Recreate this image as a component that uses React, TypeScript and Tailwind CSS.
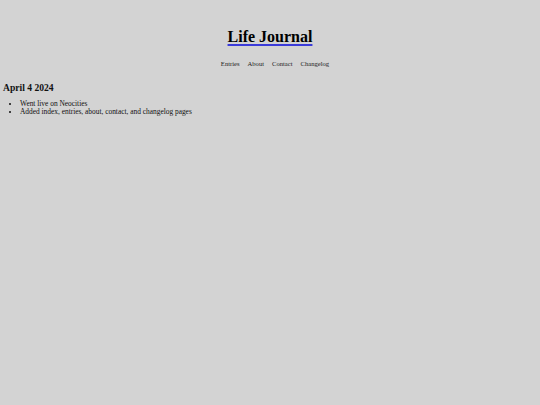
export default function App() {
  return (
    <div className="min-h-[405px] w-full bg-[#d3d3d3] text-[#111]" style={{ fontFamily: '"Liberation Serif", serif' }}>
      <div className="pt-[27px] flex justify-center">
        <a href="#" className="text-[16px] font-bold leading-[19px] text-black underline decoration-[#3b3bd9] decoration-2 underline-offset-2">Life Journal</a>
      </div>
      <nav className="mt-[14px] flex justify-center gap-[8px] pl-[10px] text-[6.6px] leading-[8px] text-[#222]">
        <span>Entries</span>
        <span>About</span>
        <span>Contact</span>
        <span>Changelog</span>
      </nav>
      <div className="px-[3px] mt-[14px]">
        <h2 className="text-[9.6px] font-bold leading-[12px]">April 4 2024</h2>
        <ul className="mt-[6px] list-disc pl-[17px] text-[7.4px] leading-[8px]">
          <li>Went live on Neocities</li>
          <li>Added index, entries, about, contact, and changelog pages</li>
        </ul>
      </div>
    </div>
  );
}
